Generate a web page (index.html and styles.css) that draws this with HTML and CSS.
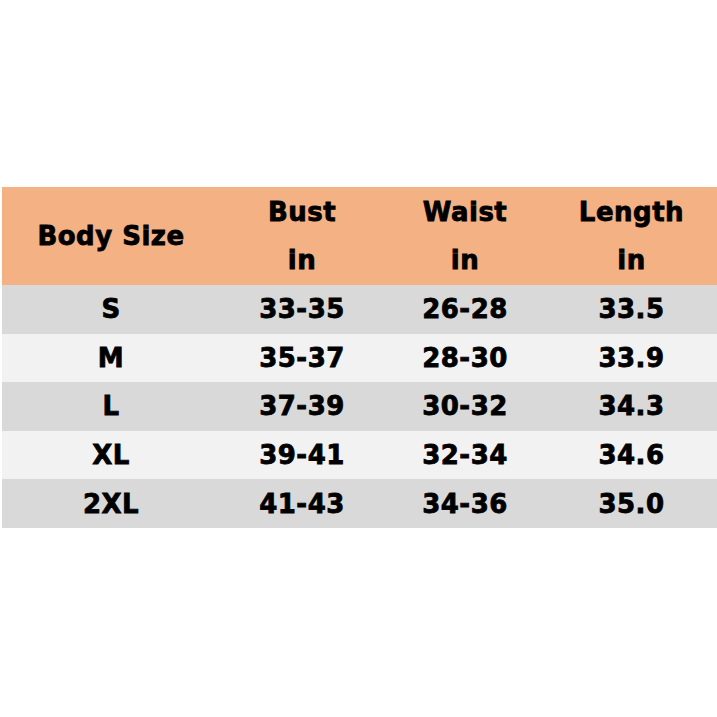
FILE: index.html
```html
<!DOCTYPE html>
<html>
<head>
<meta charset="utf-8">
<link rel="stylesheet" href="styles.css">
</head>
<body>
<div class="page">
  <div class="chart">
    <div class="row head">
      <div class="cell">Body Size</div>
      <div class="cell">Bust<br>in</div>
      <div class="cell">Waist<br>in</div>
      <div class="cell">Length<br>in</div>
    </div>
    <div class="row dark">
      <div class="cell">S</div><div class="cell">33-35</div><div class="cell">26-28</div><div class="cell">33.5</div>
    </div>
    <div class="row light">
      <div class="cell">M</div><div class="cell">35-37</div><div class="cell">28-30</div><div class="cell">33.9</div>
    </div>
    <div class="row dark">
      <div class="cell">L</div><div class="cell">37-39</div><div class="cell">30-32</div><div class="cell">34.3</div>
    </div>
    <div class="row light">
      <div class="cell">XL</div><div class="cell">39-41</div><div class="cell">32-34</div><div class="cell">34.6</div>
    </div>
    <div class="row dark">
      <div class="cell">2XL</div><div class="cell">41-43</div><div class="cell">34-36</div><div class="cell">35.0</div>
    </div>
  </div>
</div>
</body>
</html>
```
FILE: styles.css
```css
html, body {
  margin: 0;
  padding: 0;
  background: #ffffff;
}
.page {
  width: 717px;
  height: 717px;
  padding-top: 187px;
  padding-left: 2px;
  box-sizing: border-box;
}
.chart {
  font-family: "DejaVu Sans", Verdana, sans-serif;
  font-weight: bold;
  font-size: 26px;
  letter-spacing: 0.5px;
  -webkit-text-stroke: 0.8px #000;
  color: #000;
}
.row {
  display: grid;
  grid-template-columns: 218px 164px 162px 171px;
  height: 48.6px;
  align-items: center;
  text-align: center;
}
.head {
  height: 98px;
  background: #f4b183;
  line-height: 48px;
}
.dark { background: #d9d9d9; }
.light { background: #f2f2f2; }
.cell {
  white-space: nowrap;
}
```
